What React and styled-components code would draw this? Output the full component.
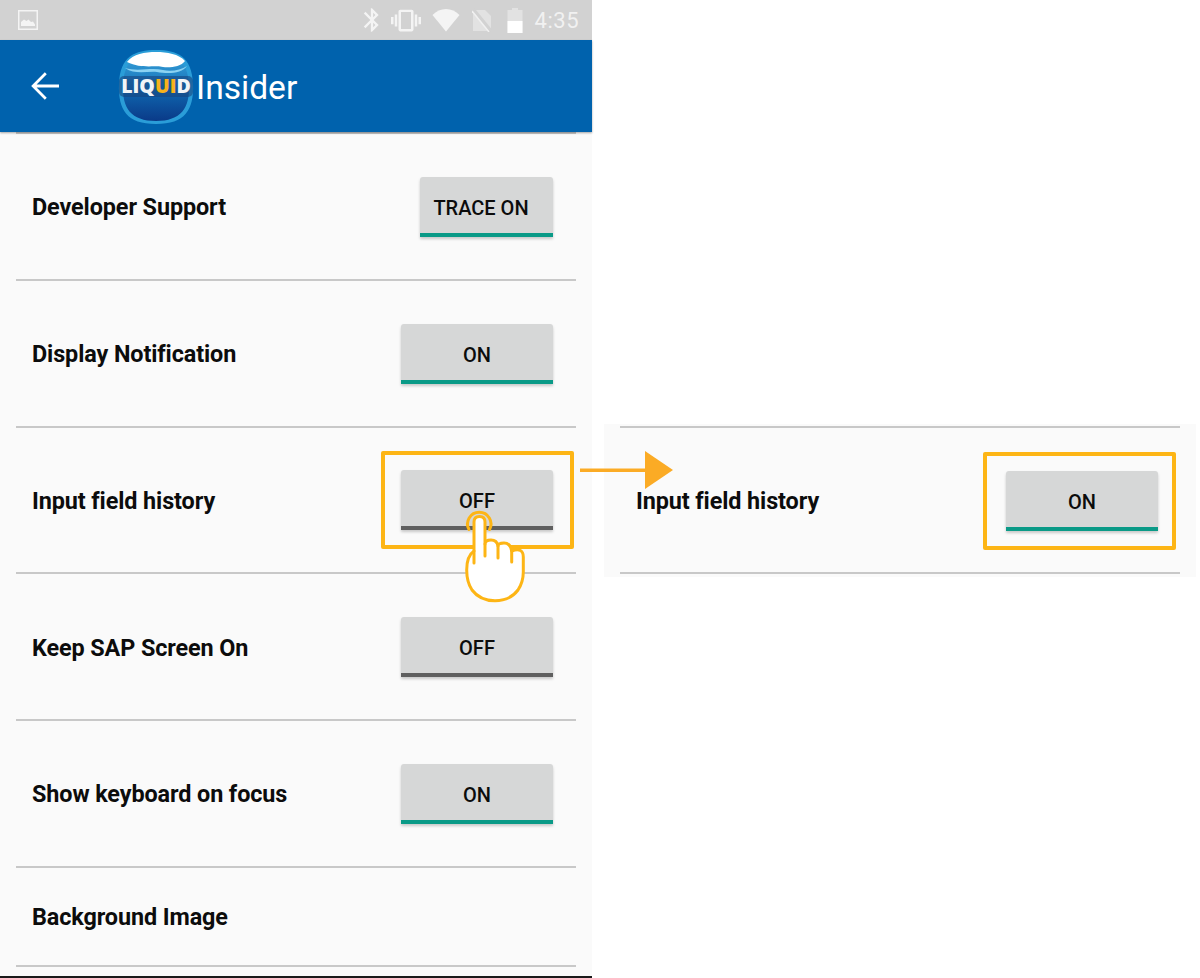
import React from 'react'
import styled, { createGlobalStyle } from 'styled-components'

const GlobalStyle = createGlobalStyle`
  html, body {
    margin: 0;
    padding: 0;
    background: #fff;
    font-family: Roboto, "Liberation Sans", sans-serif;
  }
`

const Page = styled.div`
  position: relative;
  display: flex;
  gap: 12px;
  width: 1200px;
  height: 978px;
  overflow: hidden;
`

const Phone = styled.div`
  width: 592px;
  height: 978px;
  display: flex;
  flex-direction: column;
  background: #fafafa;
  border-bottom: 2px solid #1a1a1a;
  box-sizing: border-box;
`

const StatusBar = styled.div`
  height: 40px;
  flex: none;
  display: flex;
  align-items: center;
  padding: 0 13px 0 18px;
  background: #d2d2d2;
  color: #f1f1f1;
  box-sizing: border-box;
`

const StatusIcons = styled.div`
  margin-left: auto;
  display: flex;
  align-items: center;
`

const StatusIcon = styled.svg`
  display: block;
  margin-left: ${p => p.$gap || 0}px;
`

const Clock = styled.span`
  font-size: 22px;
  letter-spacing: 0.5px;
  margin-left: 12px;
`

const AppBar = styled.div`
  height: 92px;
  flex: none;
  display: flex;
  align-items: center;
  padding-left: 24px;
  background: #0062ad;
  color: #fff;
  box-shadow: 0 1px 2px rgba(0, 0, 0, 0.35);
  position: relative;
`

const LogoWrap = styled.div`
  margin-left: 51px;
  width: 79px;
  height: 78px;
  flex: none;
  margin-top: 2px;
`

const Title = styled.h1`
  margin: 2px 0 0;
  font-size: 33.6px;
  font-weight: 400;
`

const List = styled.div`
  margin: 0 16px;
  border-top: 2px solid #c8c8c8;
`

const Row = styled.div`
  height: ${p => p.$height || '146.75px'};
  box-sizing: border-box;
  display: flex;
  align-items: center;
  justify-content: space-between;
  padding: 0 ${p => p.$inset || 23}px 0 16px;
  border-bottom: 2px solid #c8c8c8;
`

const Label = styled.span`
  font-size: 23.4px;
  font-weight: 700;
  color: #0c0c0c;
  letter-spacing: -0.1px;
  padding-top: 2px;
`

const ToggleButton = styled.div`
  position: relative;
  width: ${p => p.$width || '152px'};
  height: 60px;
  margin-top: 1px;
  box-sizing: border-box;
  display: flex;
  align-items: center;
  justify-content: center;
  padding: 6px ${p => p.$textShift || 0}px 0 0;
  border-radius: 3px 3px 0 0;
  background: #d6d7d7;
  border-bottom: 4px solid ${p => (p.$on ? '#0a9a87' : '#5f5f5f')};
  box-shadow: 0 2px 3px rgba(0, 0, 0, 0.2);
  font-size: 20px;
  font-weight: 500;
  color: #0c0c0c;
`

const Highlight = styled.div`
  position: absolute;
  top: -19px;
  bottom: -23px;
  left: -${p => p.$left}px;
  right: -${p => p.$right}px;
  border: 4px solid #fdb515;
  border-radius: 2px;
  pointer-events: none;
`

const RightColumn = styled.div`
  padding-top: 424px;
  width: 592px;
`

const DetailPanel = styled.div`
  background: #fafafa;
  padding: 2px 16px 3px;
`

const DetailList = styled.div`
  border-top: 2px solid #c8c8c8;
`

const Tap = styled.svg`
  position: absolute;
  left: 460px;
  top: 510px;
`

const FlowArrow = styled.svg`
  position: absolute;
  left: 578px;
  top: 448px;
`

const iconFill = '#f4f4f4'

const ImageIcon = () => (
  <svg width="20" height="20" viewBox="0 0 20 20" fill="none">
    <rect x="0.75" y="0.75" width="18.5" height="18.5" stroke={iconFill} strokeWidth="1.5" />
    <path d="M3 16v-4l3-2.5 2.5 1.5 2-1.5L13 12l2-.5 2 3v1.5z" fill={iconFill} />
  </svg>
)

const Bluetooth = () => (
  <StatusIcon width="28" height="28" viewBox="0 0 24 24" fill={iconFill}>
    <path d="M17.71 7.71L12 2h-1v7.59L6.41 5 5 6.41 10.59 12 5 17.59 6.41 19 11 14.41V22h1l5.71-5.71-4.3-4.29 4.3-4.29zM13 5.83l1.88 1.88L13 9.59V5.83zm1.88 10.46L13 18.17v-3.76l1.88 1.88z" />
  </StatusIcon>
)

const Vibrate = () => (
  <StatusIcon $gap={5} width="30" height="29" viewBox="0 0 24 24" fill={iconFill} preserveAspectRatio="none">
    <path d="M0 15h2V9H0v6zm3 2h2V7H3v10zm19-8v6h2V9h-2zm-3 8h2V7h-2v10zM16.5 3h-9C6.67 3 6 3.67 6 4.5v15c0 .83.67 1.5 1.5 1.5h9c.83 0 1.5-.67 1.5-1.5v-15c0-.83-.67-1.5-1.5-1.5zM16 19H8V5h8v14z" />
  </StatusIcon>
)

const Wifi = () => (
  <StatusIcon $gap={11} width="28" height="26" viewBox="0 0 28 26" fill={iconFill}>
    <path d="M14 24.5L.5 8C4.2 4.3 9 2 14 2s9.8 2.3 13.5 6z" />
  </StatusIcon>
)

const SimOff = () => (
  <StatusIcon $gap={12} width="20" height="24" viewBox="0 0 20 24">
    <path d="M1 2h12l6 6v15H1z" fill="#e2e2e2" />
    <path d="M1 1l18 22" stroke="#d2d2d2" strokeWidth="3.5" />
    <path d="M0 3l17 21" stroke="#f0f0f0" strokeWidth="1.5" />
  </StatusIcon>
)

const Battery = () => (
  <StatusIcon $gap={15} width="16" height="25" viewBox="0 0 16 25">
    <path d="M5 0h6v2h4.5v23H.5V2H5z" fill="#e2e2e2" />
    <path d="M.5 13h15v12H.5z" fill="#fff" />
  </StatusIcon>
)

const BackArrow = () => (
  <svg width="42" height="42" viewBox="0 0 24 24" fill="#fff">
    <path d="M20 11.1H7.2l5.8-5.8L11.9 4.2 4.1 12l7.8 7.8 1.1-1.1-5.8-5.8H20z" />
  </svg>
)

const Logo = () => (
  <svg width="78" height="78" viewBox="0 0 78 78">
    <defs>
      <linearGradient id="drop" x1="0" y1="0" x2="0" y2="1">
        <stop offset="0" stopColor="#3aa6dc" />
        <stop offset="0.45" stopColor="#1a78bd" />
        <stop offset="0.65" stopColor="#0e5ca6" />
        <stop offset="1" stopColor="#0a3a88" />
      </linearGradient>
    </defs>
    <path d="M39 2C60 2 75 8 76 36C77 62 68 76 39 76C10 76 1 62 2 36C3 8 18 2 39 2z" fill="#2a9dd8" />
    <path d="M39 5C58 5 71 12 72 37C73 60 64 73 39 73C14 73 5 60 6 37C7 12 20 5 39 5z" fill="url(#drop)" />
    <path d="M10 14C16 6 28 4 39 4C50 4 62 6 68 13C64 19 52 20 46 19C36 17 24 21 10 14z" fill="#fff" />
    <path d="M8 20C22 24 34 19 46 22C54 24 64 22 70 18C65 26 50 26 40 24C30 23 18 27 8 20z" fill="#8bd2f2" />
    <rect x="2" y="28" width="74" height="21" rx="5" fill="#17447f" opacity="0.6" />
    <text x="39" y="45" textAnchor="middle" fontFamily="'Open Sans', Roboto, sans-serif" fontWeight="800" fontSize="19.5" fill="#f1f4f7">
      LIQ<tspan fill="#f7b21b">UI</tspan>D
    </text>
  </svg>
)

const TapHand = () => (
  <Tap width="70" height="100" viewBox="0 0 70 100" fill="none" stroke="#fdb515" strokeWidth="3" strokeLinecap="round" strokeLinejoin="round">
    <path d="M9 19.5A11.7 11.7 0 1 1 29.5 19.5" />
    <path
      fill="#fff"
      d="M14 40V12Q14 6.5 19.5 6.5Q25 6.5 25 12V34Q25 30 31 30Q37 30 38 36Q38 33 44 33Q50.5 33 51.7 41Q63.3 37 63.3 47V62Q63.3 72 58 80Q50 90.7 35 90.7Q20 90.7 12 80Q6.7 72 6.7 60Q6.7 46 14 41Z"
    />
    <path d="M14 41V53M25 34V46M38 36V48M51.7 41V52" />
  </Tap>
)

const Arrow = () => (
  <FlowArrow width="100" height="44" viewBox="0 0 100 44">
    <path d="M2 20.5h70v3.5H2z" fill="#fbab25" />
    <path d="M67 3l28 19-28 19z" fill="#fbab25" />
  </FlowArrow>
)

const settings = [
  { label: 'Developer Support', value: 'TRACE ON', on: true, width: '133px', textShift: 11 },
  { label: 'Display Notification', value: 'ON', on: true },
  { label: 'Input field history', value: 'OFF', on: false, marked: true },
  { label: 'Keep SAP Screen On', value: 'OFF', on: false },
  { label: 'Show keyboard on focus', value: 'ON', on: true },
]

const App = () => (
  <Page>
    <GlobalStyle />
    <Phone>
      <StatusBar>
        <ImageIcon />
        <StatusIcons>
          <Bluetooth />
          <Vibrate />
          <Wifi />
          <SimOff />
          <Battery />
          <Clock>4:35</Clock>
        </StatusIcons>
      </StatusBar>
      <AppBar>
        <BackArrow />
        <LogoWrap>
          <Logo />
        </LogoWrap>
        <Title>Insider</Title>
      </AppBar>
      <List>
        {settings.map(s => (
          <Row key={s.label}>
            <Label>{s.label}</Label>
            <ToggleButton $on={s.on} $width={s.width} $textShift={s.textShift}>
              {s.value}
              {s.marked && <Highlight $left={20} $right={21} />}
            </ToggleButton>
          </Row>
        ))}
        <Row $height="99px">
          <Label>Background Image</Label>
        </Row>
      </List>
    </Phone>
    <RightColumn>
      <DetailPanel>
        <DetailList>
          <Row $height="146px" $inset={22}>
            <Label>Input field history</Label>
            <ToggleButton $on>
              ON
              <Highlight $left={23} $right={18} />
            </ToggleButton>
          </Row>
        </DetailList>
      </DetailPanel>
    </RightColumn>
    <TapHand />
    <Arrow />
  </Page>
)

export default App
